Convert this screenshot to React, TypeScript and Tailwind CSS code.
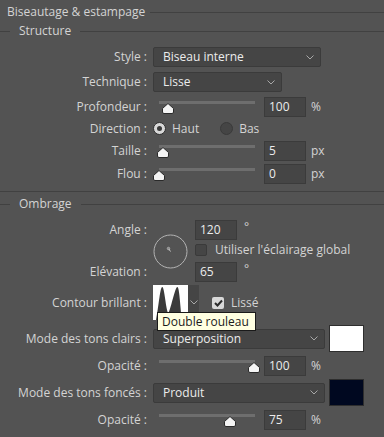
import React from 'react';

const txt = 'text-[#d4d4d4]';

function Chevron() {
  return (
    <svg width="8" height="5" viewBox="0 0 8 5" className="shrink-0">
      <path d="M0.5 0.5 L4 4 L7.5 0.5" fill="none" stroke="#a8a8a8" strokeWidth="1" />
    </svg>
  );
}

function Select({ width, value }: { width: string; value: string }) {
  return (
    <div className={`${width} h-5 flex items-center justify-between pl-[9px] pr-[6px] bg-[#454545] border border-[#3b3b3b] rounded-[2px] text-[#ececec]`}>
      <span>{value}</span>
      <Chevron />
    </div>
  );
}

function NumInput({ value }: { value: string }) {
  return (
    <div className="w-[42px] h-5 flex items-center pl-[4px] bg-[#454545] border border-[#3b3b3b] text-[#ececec]">
      {value}
    </div>
  );
}

function Thumb() {
  return (
    <svg width="12" height="11" viewBox="0 0 12 11">
      <path d="M6 0.5 L11.5 5.5 L11.5 9 Q11.5 10.5 10 10.5 L2 10.5 Q0.5 10.5 0.5 9 L0.5 5.5 Z" fill="#f4f4f4" stroke="#2a2a2a" strokeWidth="1" />
    </svg>
  );
}

function Slider({ pos }: { pos: number }) {
  return (
    <div className="relative w-[96px] h-5 ml-[6px] mr-[9px]">
      <div className="absolute left-0 right-0 top-[4px] h-[3px] bg-[#6e6e6e]" />
      <div className="absolute top-[6px]" style={{ left: pos - 6 }}>
        <Thumb />
      </div>
    </div>
  );
}

function Label({ children }: { children: React.ReactNode }) {
  return <div className={`w-[148px] shrink-0 text-right pr-[1px] ${txt}`}>{children}</div>;
}

function Row({ label, className, children }: { label: string; className: string; children: React.ReactNode }) {
  return (
    <div className={`flex items-center ${className}`}>
      <Label>{label}</Label>
      <div className="flex items-center pl-[5px]">{children}</div>
    </div>
  );
}

function SliderRow({ label, pos, value, unit, className }: { label: string; pos: number; value: string; unit: string; className: string }) {
  return (
    <Row label={label} className={`h-5 ${className}`}>
      <Slider pos={pos} />
      <NumInput value={value} />
      <span className={`ml-[5px] ${txt}`}>{unit}</span>
    </Row>
  );
}

function Radio({ checked }: { checked: boolean }) {
  return checked ? (
    <div className="w-[13px] h-[13px] rounded-full bg-[#d8d8d8] border border-[#2e2e2e] flex items-center justify-center">
      <div className="w-[5px] h-[5px] rounded-full bg-[#3a3a3a]" />
    </div>
  ) : (
    <div className="w-[13px] h-[13px] rounded-full bg-[#454545] border border-[#3a3a3a]" />
  );
}

function Check({ checked }: { checked: boolean }) {
  return checked ? (
    <div className="w-[12px] h-[12px] rounded-[2px] bg-[#d8d8d8] flex items-center justify-center">
      <svg width="9" height="8" viewBox="0 0 9 8">
        <path d="M1 4 L3.5 6.5 L8 1.5" fill="none" stroke="#2a2a2a" strokeWidth="2" />
      </svg>
    </div>
  ) : (
    <div className="w-[12px] h-[12px] rounded-[2px] bg-[#454545] border border-[#3a3a3a]" />
  );
}

function GroupHeader({ title, className }: { title: string; className: string }) {
  return (
    <div className={`flex items-center h-[14px] ${className}`}>
      <div className="w-[10px] h-px bg-[#414141]" />
      <span className={`px-[9px] ${txt}`}>{title}</span>
      <div className="flex-1 h-px bg-[#414141]" />
    </div>
  );
}

export default function App() {
  return (
    <div className="relative w-[384px] h-[437px] bg-[#535353] overflow-hidden font-['Open_Sans',sans-serif] text-[12px] leading-4">
      <div className="flex items-center h-[24px]">
        <span className={`pl-[7px] pr-[5px] ${txt}`}>Biseautage &amp; estampage</span>
        <div className="flex-1 h-px bg-[#414141]" />
      </div>

      <GroupHeader title="Structure" className="" />

      <Row label="Style :" className="h-5 mt-[9px]">
        <Select width="w-[168px]" value="Biseau interne" />
      </Row>
      <Row label="Technique :" className="h-5 mt-[5px]">
        <Select width="w-[129px]" value="Lisse" />
      </Row>
      <SliderRow label="Profondeur :" pos={9} value="100" unit="%" className="mt-[5px]" />
      <Row label="Direction :" className="h-[19px] mt-[2px]">
        <Radio checked />
        <span className={`ml-[6px] ${txt}`}>Haut</span>
        <div className="ml-[21px]">
          <Radio checked={false} />
        </div>
        <span className={`ml-[6px] ${txt}`}>Bas</span>
      </Row>
      <SliderRow label="Taille :" pos={4} value="5" unit="px" className="mt-[3px]" />
      <SliderRow label="Flou :" pos={0} value="0" unit="px" className="mt-[3px]" />

      <div className="mt-[7px] h-px bg-[#414141]" />

      <GroupHeader title="Ombrage" className="mt-[5px]" />

      <div className="flex mt-[9px] h-[62px]">
        <div className="flex flex-col justify-between">
          <div className="h-5 flex items-center">
            <Label>Angle :</Label>
          </div>
          <div className="h-5 flex items-center">
            <Label>Elévation :</Label>
          </div>
        </div>
        <div className="ml-[5px] flex items-center">
          <svg width="35" height="35" viewBox="0 0 35 35">
            <circle cx="17.5" cy="17.5" r="16.5" fill="none" stroke="#b4b4b4" strokeWidth="1" />
            <line x1="17.5" y1="17.5" x2="15.5" y2="14.5" stroke="#c8c8c8" strokeWidth="1" />
            <circle cx="15.5" cy="14.5" r="1.2" fill="none" stroke="#c8c8c8" strokeWidth="0.8" />
          </svg>
        </div>
        <div className="ml-[7px] flex flex-col">
          <div className="flex items-center">
            <NumInput value="120" />
            <span className={`ml-[7px] -mt-[6px] ${txt}`}>°</span>
          </div>
          <div className="h-5 flex items-center">
            <Check checked={false} />
            <span className={`ml-[8px] ${txt}`}>Utiliser l'éclairage global</span>
          </div>
          <div className="flex items-center mt-[2px]">
            <NumInput value="65" />
            <span className={`ml-[7px] -mt-[6px] ${txt}`}>°</span>
          </div>
        </div>
      </div>

      <Row label="Contour brillant :" className="h-[35px] mt-[3px]">
        <div className="flex h-[35px]">
          <svg width="35" height="35" viewBox="0 0 35 35" className="bg-white">
            <path d="M3 35 C6 20 7 2 9.3 2 C11.5 2 13 26 15.3 28 C17.5 26 22 2 24.3 2 C26.5 2 27 20 29 35 Z" fill="#3a3a3a" />
          </svg>
          <div className="w-[11px] h-[35px] bg-[#454545] flex items-center justify-center">
            <Chevron />
          </div>
        </div>
        <div className="ml-[13px]">
          <Check checked />
        </div>
        <span className={`ml-[7px] ${txt}`}>Lissé</span>
      </Row>

      <Row label="Mode des tons clairs :" className="h-[27px] mt-[5px]">
        <Select width="w-[172px]" value="Superposition" />
        <div className="ml-[4px] w-[35px] h-[27px] bg-white border border-[#2e2e2e]" />
      </Row>
      <SliderRow label="Opacité :" pos={95} value="100" unit="%" className="mt-[4px]" />
      <Row label="Mode des tons foncés :" className="h-[27px] mt-[3px]">
        <Select width="w-[172px]" value="Produit" />
        <div className="ml-[4px] w-[35px] h-[27px] bg-[#000820] border border-[#2e2e2e]" />
      </Row>
      <SliderRow label="Opacité :" pos={71} value="75" unit="%" className="mt-[4px]" />

      <div className="absolute left-[157px] top-[312px] h-[19px] w-[99px] bg-[#ffffe1] border border-[#1a1a1a] flex items-center pl-[4px] text-[#1a1a1a]">
        Double rouleau
      </div>
    </div>
  );
}
